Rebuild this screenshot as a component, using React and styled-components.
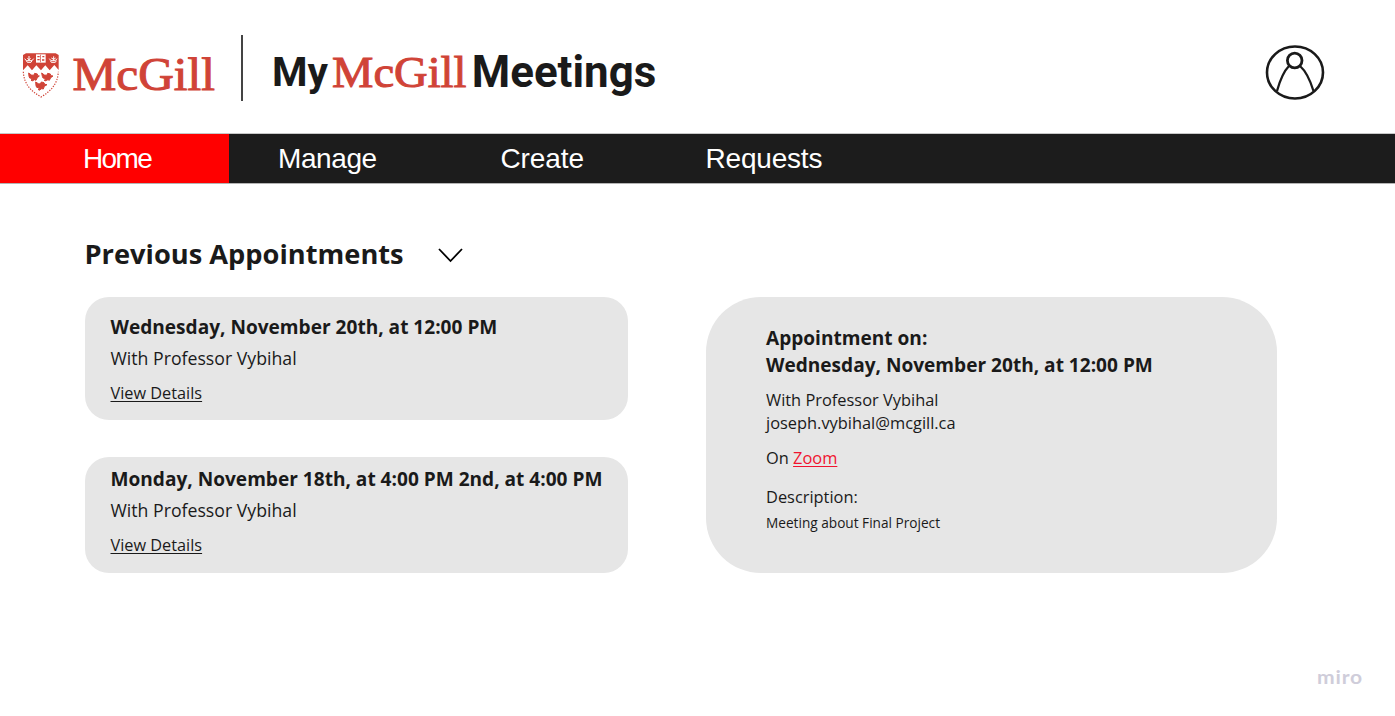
import React from "react";
import styled, { createGlobalStyle } from "styled-components";

const GlobalStyle = createGlobalStyle`
  * { box-sizing: border-box; }
  body { margin: 0; background: #fff; }
`;

const Page = styled.div`
  width: 1395px;
  height: 716px;
  display: flex;
  flex-direction: column;
  background: #fff;
  color: #1a1a1a;
  font-family: "Open Sans", "Noto Sans", sans-serif;
  overflow: hidden;
`;

const Header = styled.header`
  height: 133px;
  flex: none;
  display: flex;
  align-items: flex-start;
  padding: 35px 70px 0 20px;
`;

const LogoArt = styled.svg`
  display: block;
  flex: none;
  overflow: visible;
`;

const Divider = styled.div`
  width: 1.5px;
  height: 66px;
  margin: 0 29px 0 21px;
  background: #444;
`;

const Avatar = styled.button`
  margin: 9px 0 0 auto;
  padding: 0;
  border: 0;
  background: none;
`;

const Nav = styled.nav`
  height: 51px;
  flex: none;
  display: flex;
  background: #1c1c1c;
  border-top: 1px solid #c8c8c8;
  border-bottom: 1px solid #b4b4b4;
`;

const NavItem = styled.a`
  width: ${(p) => p.$width}px;
  padding-left: ${(p) => p.$indent}px;
  background: ${(p) => (p.$active ? "#ff0000" : "transparent")};
  color: #fff;
  font-family: "Liberation Sans", Arial, sans-serif;
  font-size: 28px;
  letter-spacing: ${(p) => p.$spacing || 0}px;
  line-height: 50px;
`;

const Main = styled.main`
  flex: 1;
  display: flex;
  flex-direction: column;
  padding: 52px 0 0 84.5px;
`;

const HeadingRow = styled.div`
  height: 60.5px;
  display: flex;
  align-items: flex-start;
  gap: 34px;
`;

const Heading = styled.h1`
  margin: 0;
  font-size: 27.25px;
  line-height: 36px;
  font-weight: 700;
  white-space: nowrap;
`;

const Chevron = styled.svg`
  margin-top: 12px;
`;

const Columns = styled.div`
  display: flex;
  gap: 78px;
`;

const List = styled.div`
  display: flex;
  flex-direction: column;
  gap: 37px;
`;

const Card = styled.article`
  width: 543.5px;
  height: ${(p) => p.$height}px;
  padding: ${(p) => p.$top}px 0 0 26px;
  border-radius: 24px;
  background: #e6e6e6;
`;

const Detail = styled.section`
  width: 571px;
  height: 276px;
  padding: 28px 0 0 60px;
  border-radius: 55px;
  background: #e6e6e6;
`;

const Title = styled.h2`
  margin: 0;
  font-size: 19.08px;
  line-height: ${(p) => p.$line || 28}px;
  font-weight: 700;
  white-space: nowrap;
`;

const Line = styled.p`
  margin: ${(p) => p.$gap || 0}px 0 0;
  font-size: ${(p) => p.$size || 16.3}px;
  line-height: ${(p) => p.$line || 24}px;
  white-space: nowrap;
`;

const TextLink = styled.a`
  color: ${(p) => p.$color || "inherit"};
  text-decoration: underline;
  text-decoration-thickness: 1px;
  text-underline-offset: 2px;
`;

const Footer = styled.footer`
  position: absolute;
  left: 1318px;
  top: 664px;
`;

function McGillLogo() {
  return (
    <LogoArt width="200" height="70" viewBox="20 35 200 70">
      <g transform="translate(15 45) scale(0.33333)" fill="#d04337">
        <path d="M24 30 L33 25 H122 L131 30 V75 L118 60 L104 76 L91 61 L78 76 L64 61 L51 76 L38 61 L24 76 Z" />
        <path d="M63 28 H92 V53 H63 Z" fill="#fff" />
        <path d="M67 33h7v4h-7z M82 33h6v4h-6z M67 42h7v4h-7z M81 43h7v4h-7z M76 29h2v23h-2z" />
        <g fill="none" stroke="#fff" strokeWidth="3">
          <path d="M29 41 l5 6 h17 l5-6 M34 47 l3 5 h11 l3-5 M42 33 v14 M37 40 l5 4 5-4" />
          <path d="M103 41 l5 6 h13 l5-6 M106 47 l3 5 h12 l3-5 M116 34 v13 M109 39 l7 4 6-4" />
        </g>
        <g stroke="#d04337" strokeWidth="3">
          <path d="M41 84 l8 6 7 1 3-6 8 2 1 5 5 1-6 5-4 8-4-2-8 4-3-3 5-4-9-2-2-5z" />
          <path d="M80 84 l8 6 7 1 3-6 8 2 1 5 7 1-7 5-4 8-4-2-9 4-2-3 5-4-9-2-2-5z" />
          <path d="M62 111 l8 5 6 1 3-6 8 2 2 5 7 1-8 5-3 8-5-1-8 5-2-4 4-3-9-2-2-5z" />
        </g>
        <path d="M25 80 C27 117 46 137 78 156 C109 137 128 117 130 80" fill="none" stroke="#d04337" strokeWidth="3.5" strokeDasharray="4 4" />
      </g>
      <text x="72.5" y="89.5" fill="#d04337" stroke="#d04337" strokeWidth="1" fontFamily="Liberation Serif, serif" fontSize="46" textLength="142.5" lengthAdjust="spacingAndGlyphs">McGill</text>
    </LogoArt>
  );
}

function ProductTitle() {
  return (
    <LogoArt width="390" height="75" viewBox="271 35 390 75">
      <g fill="#1a1a1a" fontFamily="Roboto, sans-serif" fontWeight="700">
        <text x="271" y="86.2" fontSize="41" textLength="56" lengthAdjust="spacingAndGlyphs">My</text>
        <text x="470.8" y="87.2" fontSize="44.5" textLength="184.5" lengthAdjust="spacingAndGlyphs">Meetings</text>
      </g>
      <text x="331" y="87.2" fill="#d04337" stroke="#d04337" strokeWidth="1" fontFamily="Liberation Serif, serif" fontSize="45" textLength="134.5" lengthAdjust="spacingAndGlyphs">McGill</text>
    </LogoArt>
  );
}

export default function App() {
  return (
    <Page>
      <GlobalStyle />
      <Header>
        <McGillLogo />
        <Divider />
        <ProductTitle />
        <Avatar aria-label="Profile">
          <LogoArt width="60" height="57" viewBox="0 0 60 57" fill="none" stroke="#1a1a1a">
            <ellipse cx="30" cy="28.5" rx="28" ry="26" strokeWidth="2.6" />
            <circle cx="29.7" cy="16.5" r="7.3" strokeWidth="2.8" />
            <path d="M24 22 Q17 29 12 47 M35 22 Q43 29 48.5 47" strokeWidth="2.3" />
          </LogoArt>
        </Avatar>
      </Header>
      <Nav>
        <NavItem $active $width={229} $indent={83} $spacing={-1.6}>Home</NavItem>
        <NavItem $width={221} $indent={49} $spacing={-0.4}>Manage</NavItem>
        <NavItem $width={205} $indent={50.5} $spacing={-0.1}>Create</NavItem>
        <NavItem $width={200} $indent={50.5} $spacing={-0.2}>Requests</NavItem>
      </Nav>
      <Main>
        <HeadingRow>
          <Heading>Previous Appointments</Heading>
          <Chevron width="25" height="15" viewBox="0 0 25 15" fill="none" stroke="#000" strokeWidth="1.8">
            <path d="M1 1 L12.5 13 L24 1" />
          </Chevron>
        </HeadingRow>
        <Columns>
          <List>
            <Card $height={123.5} $top={16}>
              <Title>Wednesday, November 20th, at 12:00 PM</Title>
              <Line $size={17.7} $line={28} $gap={3}>With Professor Vybihal</Line>
              <Line $line={28} $gap={7}><TextLink>View Details</TextLink></Line>
            </Card>
            <Card $height={115.5} $top={8}>
              <Title>Monday, November 18th, at 4:00 PM 2nd, at 4:00 PM</Title>
              <Line $size={17.7} $line={28} $gap={3}>With Professor Vybihal</Line>
              <Line $line={28} $gap={7}><TextLink>View Details</TextLink></Line>
            </Card>
          </List>
          <Detail>
            <Title $line={27.5}>Appointment on:</Title>
            <Title $line={27.5}>Wednesday, November 20th, at 12:00 PM</Title>
            <Line $size={16.4} $line={23.5} $gap={8.2}>With Professor Vybihal</Line>
            <Line $size={16.4} $line={23.5}>joseph.vybihal@mcgill.ca</Line>
            <Line $size={16.4} $gap={11.3}>On <TextLink $color="#f0142f">Zoom</TextLink></Line>
            <Line $size={16.4} $gap={15}>Description:</Line>
            <Line $size={13.65} $gap={2.5}>Meeting about Final Project</Line>
          </Detail>
        </Columns>
      </Main>
      <Footer>
        <LogoArt width="46" height="24" viewBox="0 0 46 24" fill="#cfcdda">
          <text transform="translate(-1 20) scale(1.08 1)" fontFamily="Lato, sans-serif" fontWeight="700" fontSize="19.5" letterSpacing="0.8">miro</text>
        </LogoArt>
      </Footer>
    </Page>
  );
}
